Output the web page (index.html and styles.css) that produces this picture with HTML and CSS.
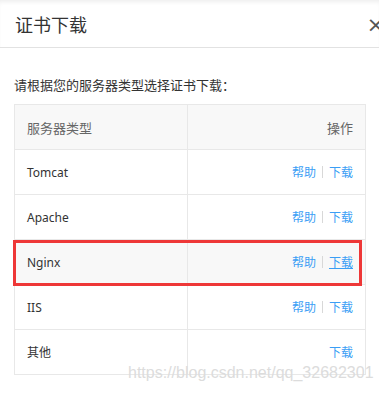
FILE: index.html
```html
<!DOCTYPE html>
<html lang="zh-CN">
<head>
    <meta charset="UTF-8">
    <meta name="viewport" content="width=device-width, initial-scale=1.0">
    <title>证书下载</title>
    <link rel="stylesheet" href="styles.css">
</head>
<body>
    <div class="dialog">
        <div class="dialog-header">
            <h2 class="dialog-title">证书下载</h2>
            <span class="dialog-close">&times;</span>
        </div>
        <div class="dialog-body">
            <p class="tip">请根据您的服务器类型选择证书下载：</p>
            <div class="table-wrap">
                <table class="cert-table">
                    <thead>
                        <tr>
                            <th class="col-type">服务器类型</th>
                            <th class="col-op">操作</th>
                        </tr>
                    </thead>
                    <tbody>
                        <tr>
                            <td>Tomcat</td>
                            <td class="col-op"><a href="#">帮助</a><span class="sep"></span><a href="#">下载</a></td>
                        </tr>
                        <tr>
                            <td>Apache</td>
                            <td class="col-op"><a href="#">帮助</a><span class="sep"></span><a href="#">下载</a></td>
                        </tr>
                        <tr class="hover">
                            <td>Nginx</td>
                            <td class="col-op"><a href="#">帮助</a><span class="sep"></span><a href="#" class="active">下载</a></td>
                        </tr>
                        <tr>
                            <td>IIS</td>
                            <td class="col-op"><a href="#">帮助</a><span class="sep"></span><a href="#">下载</a></td>
                        </tr>
                        <tr>
                            <td>其他</td>
                            <td class="col-op"><a href="#">下载</a></td>
                        </tr>
                    </tbody>
                </table>
                <div class="mark"></div>
            </div>
        </div>
    </div>
    <div class="watermark">https://blog.csdn.net/qq_32682301</div>
</body>
</html>
```

FILE: styles.css
```css
body {
    margin: 0;
    padding: 0;
    overflow: hidden;
    background: #fff;
    color: #333;
    font-family: "Noto Sans", "Noto Sans CJK SC", sans-serif;
    position: relative;
    height: 393px;
}

.dialog-header {
    display: flex;
    justify-content: space-between;
    align-items: center;
    height: 47px;
    padding: 0 0 0 15px;
    border-bottom: 1px solid #e2e2e2;
    box-shadow: inset 0 4px 4px -2px rgba(0, 0, 0, 0.07);
}

.dialog-title {
    margin: 0;
    font-size: 18px;
    font-weight: normal;
    color: #333;
    line-height: 1;
    padding-top: 2px;
}

.dialog-close {
    font-family: "DejaVu Sans", sans-serif;
    font-size: 22px;
    color: #555;
    margin-right: -6px;
    line-height: 1;
    padding-top: 3px;
}

.dialog-body {
    padding: 29px 13px 0 14px;
}

.tip {
    margin: 0 0 10px;
    font-size: 13px;
    line-height: 17px;
    color: #333;
}

.table-wrap {
    position: relative;
}

.cert-table {
    width: 352px;
    border-collapse: collapse;
    font-size: 12px;
}

.cert-table th,
.cert-table td {
    height: 44px;
    padding: 0 12px;
    border: 1px solid #e8e8e8;
    text-align: left;
    font-weight: normal;
}

.cert-table th {
    background: #f8f8f8;
    color: #666;
    font-size: 13px;
}

.cert-table .col-type {
    width: 148px;
}

.cert-table .col-op {
    text-align: right;
}

.cert-table tr.hover td {
    background: #f8f8f8;
}

.cert-table a {
    color: #3a9ef5;
    text-decoration: none;
    font-size: 12px;
}

.cert-table a.active {
    text-decoration: underline;
}

.sep {
    display: inline-block;
    width: 1px;
    height: 12px;
    background: #d8d8d8;
    margin: 0 6px;
    vertical-align: -1px;
}

.mark {
    position: absolute;
    left: -1px;
    top: 136px;
    width: 349px;
    height: 46px;
    border: 3px solid #ee3737;
    box-sizing: border-box;
}

.watermark {
    position: absolute;
    left: 128px;
    top: 364px;
    font-family: "Liberation Sans", Arial, sans-serif;
    font-size: 16px;
    color: #dcdcdc;
    white-space: nowrap;
}
```
